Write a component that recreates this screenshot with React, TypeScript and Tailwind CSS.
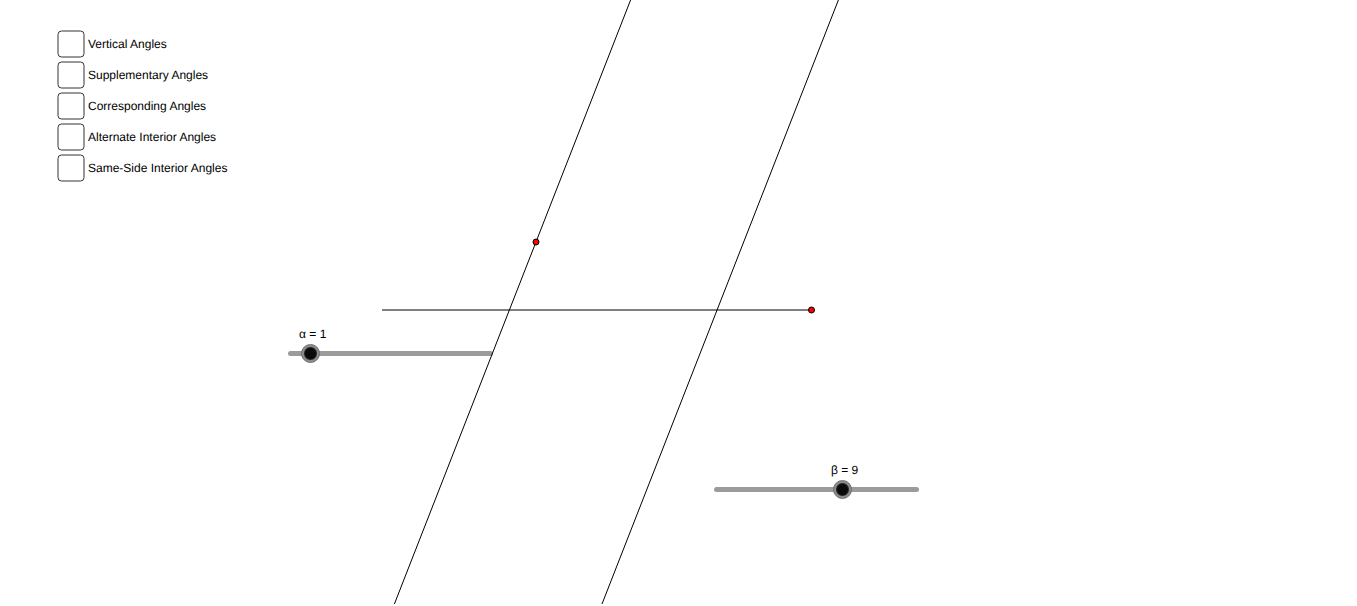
import React, { useState } from 'react';

interface AngleSliderProps {
  id: string;
  symbol: string;
  min: number;
  max: number;
  initial: number;
  className: string;
}

const ANGLE_TYPES = [
  'Vertical Angles',
  'Supplementary Angles',
  'Corresponding Angles',
  'Alternate Interior Angles',
  'Same-Side Interior Angles',
];

// distance in px that the thumb travels from min to max
const TRAVEL = 200;

const AngleSlider: React.FC<AngleSliderProps> = ({ id, symbol, min, max, initial, className }) => {
  const [value, setValue] = useState(initial);
  const offset = Math.round(((value - min) / (max - min)) * TRAVEL);

  return (
    <div className={`absolute flex w-[221px] flex-col gap-[2px] ${className}`}>
      <label
        htmlFor={id}
        className="w-fit whitespace-nowrap"
        style={{ marginLeft: offset }}
      >
        {symbol} = {value}
      </label>
      <div className="grid items-center pl-[2px]">
        <div className="col-start-1 row-start-1 mx-[7px] h-[5px] rounded-full bg-[#9b9b9b]" />
        <input
          id={id}
          type="range"
          min={min}
          max={max}
          value={value}
          onChange={(e) => setValue(Number(e.target.value))}
          className="col-start-1 row-start-1 h-[19px] w-full cursor-pointer appearance-none bg-transparent [&::-webkit-slider-thumb]:size-[19px] [&::-webkit-slider-thumb]:appearance-none [&::-webkit-slider-thumb]:rounded-full [&::-webkit-slider-thumb]:border [&::-webkit-slider-thumb]:border-[#6c6c6c] [&::-webkit-slider-thumb]:bg-[radial-gradient(circle,#0a0a0a_5px,#2a2a2a_6px,#8c8c8c_7px)]"
        />
      </div>
    </div>
  );
};

const Diagram: React.FC = () => (
  <svg className="pointer-events-none absolute inset-0 h-full w-full" stroke="black">
    <line x1="382" y1="310" x2="811" y2="310" />
    <line x1="630.6" y1="0" x2="394.4" y2="604" />
    <line x1="838.4" y1="0" x2="602" y2="604" />
    <circle cx="536" cy="242" r="3" fill="red" />
    <circle cx="811.5" cy="310" r="3" fill="red" />
  </svg>
);

const App: React.FC = () => {
  const [checked, setChecked] = useState<string[]>([]);

  const toggle = (name: string) => {
    setChecked((prev) => (prev.includes(name) ? prev.filter((n) => n !== name) : [...prev, name]));
  };

  return (
    <main className="flex min-h-screen flex-col bg-white pb-0.5 font-['Liberation_Sans',Arial,sans-serif] text-[12px] leading-[16px] text-black [text-rendering:geometricPrecision]">
      <div className="relative flex-1 overflow-hidden pt-[30px] pl-[57px]">
        <AngleSlider id="alpha" symbol="α" min={0} max={10} initial={1} className="top-[326px] left-[279px]" />
        <AngleSlider id="beta" symbol="β" min={-8} max={19} initial={9} className="top-[462px] left-[705px]" />
        <Diagram />
        <ul className="relative flex w-fit flex-col gap-[3px]">
          {ANGLE_TYPES.map((name) => (
            <li key={name}>
              <label className="flex cursor-pointer items-center gap-[3px]">
                <span className="grid size-[28px]">
                  <input
                    type="checkbox"
                    checked={checked.includes(name)}
                    onChange={() => toggle(name)}
                    className="peer col-start-1 row-start-1 size-[28px] appearance-none"
                  />
                  <svg
                    viewBox="0 0 28 28"
                    fill="none"
                    stroke="#333333"
                    className="pointer-events-none col-start-1 row-start-1 size-[28px] peer-checked:[&>path]:opacity-100"
                  >
                    <rect x="1" y="1" width="26" height="26" rx="3.5" />
                    <path d="M7 14l5 6 9-12" strokeWidth="3" className="opacity-0" />
                  </svg>
                </span>
                {name}
              </label>
            </li>
          ))}
        </ul>
      </div>
    </main>
  );
};

export default App;
